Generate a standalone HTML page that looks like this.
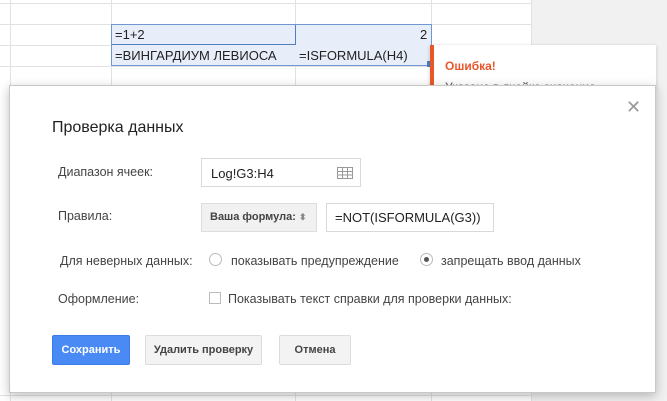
<!DOCTYPE html><html><head><meta charset="utf-8"><style>
body{margin:0;width:667px;height:401px;overflow:hidden;position:relative;background:#fff;font-family:"Liberation Sans",Arial,sans-serif;color:#222}
.a{position:absolute}
.vl{position:absolute;top:0;height:401px;width:1px;background:#e2e2e2}
.hl{position:absolute;left:0;width:531px;height:1px;background:#e2e2e2}
.btn{position:absolute;top:335px;height:28px;border:1px solid #dcdcdc;background:#f3f3f3;border-radius:2px;font-size:11px;font-weight:bold;color:#444;line-height:28px;text-align:center}
</style></head><body>
<div class="a" style="left:531px;top:0;width:136px;height:401px;background:#f1f1f1"></div>
<div class="vl" style="left:10px"></div><div class="vl" style="left:111px"></div><div class="vl" style="left:295px"></div><div class="vl" style="left:431px"></div><div class="vl" style="left:531px"></div>
<div class="hl" style="top:3px"></div><div class="hl" style="top:24px"></div><div class="hl" style="top:45px"></div><div class="hl" style="top:66px"></div>
<div class="hl" style="top:395px"></div>
<div class="a" style="left:111px;top:24px;width:320px;height:42px;background:#e8eef9"></div>
<div class="a" style="left:111px;top:24px;width:184px;height:20px;border:1px solid #4f7fc2;box-sizing:border-box;width:185px;height:21px"></div>
<div class="a" style="left:111px;top:24px;width:321px;height:42px;border:1px solid #6f98d2;box-sizing:border-box"></div>
<div class="a" style="left:115px;top:27px;font-size:13px">=1+2</div>
<div class="a" style="left:420px;top:27px;font-size:13px">2</div>
<div class="a" style="left:115px;top:48px;font-size:13px">=ВИНГАРДИУМ ЛЕВИОСА</div>
<div class="a" style="left:299px;top:48px;font-size:13px">=ISFORMULA(H4)</div>
<div class="a" style="left:427px;top:61px;width:6px;height:6px;background:#4f7fc2"></div>
<div class="a" style="left:430px;top:45px;width:226px;height:45px;background:#fff;box-shadow:0 1px 4px rgba(0,0,0,.2)"></div>
<div class="a" style="left:430px;top:45px;width:4px;height:40px;background:#e8572a"></div>
<div class="a" style="left:445px;top:59px;font-size:12px;font-weight:bold;color:#e8572a">Ошибка!</div>
<div class="a" style="left:445px;top:80px;font-size:12px;color:#555">Указано в ячейке значение</div>
<div class="a" style="left:9px;top:85px;width:647px;height:308px;background:#fff;border:1px solid #c8c8c8;box-sizing:border-box;box-shadow:0 3px 10px rgba(0,0,0,.25)"></div>
<div class="a" style="left:626px;top:97px;font-size:18px;color:#999">✕</div>
<div class="a" style="left:52px;top:119px;font-size:16px">Проверка данных</div>
<div class="a" style="left:58px;top:165px;font-size:12.5px;color:#444">Диапазон ячеек:</div>
<div class="a" style="left:201px;top:158px;width:160px;height:29px;border:1px solid #d9d9d9;box-sizing:border-box"></div>
<div class="a" style="left:211px;top:166px;font-size:13px">Log!G3:H4</div>
<svg class="a" style="left:336px;top:166px" width="18" height="14"><g stroke="#999" fill="none" stroke-width="1"><rect x="1.5" y="1.5" width="15" height="11"/><path d="M1.5 5.5h15M1.5 9h15M6.5 1.5v11M11.5 1.5v11"/></g></svg>
<div class="a" style="left:58px;top:209px;font-size:12.5px;color:#444">Правила:</div>
<div class="a" style="left:201px;top:203px;width:116px;height:29px;background:#f1f1f1;border:1px solid #ddd;box-sizing:border-box;font-size:11px;font-weight:bold;color:#444;line-height:27px;padding-left:8px">Ваша формула: <span style="font-size:9px;color:#888">⬍</span></div>
<div class="a" style="left:326px;top:203px;width:168px;height:29px;border:1px solid #d9d9d9;box-sizing:border-box;font-size:13px;line-height:27px;padding-left:8px">=NOT(ISFORMULA(G3))</div>
<div class="a" style="left:60px;top:254px;font-size:12.5px;color:#444">Для неверных данных:</div>
<div class="a" style="left:209px;top:253px;width:13px;height:13px;border:1px solid #bbb;border-radius:50%;box-sizing:border-box"></div>
<div class="a" style="left:231px;top:254px;font-size:12.5px;color:#444">показывать предупреждение</div>
<div class="a" style="left:420px;top:253px;width:13px;height:13px;border:1px solid #bbb;border-radius:50%;box-sizing:border-box"></div>
<div class="a" style="left:424px;top:257px;width:5px;height:5px;border-radius:50%;background:#555"></div>
<div class="a" style="left:441px;top:254px;font-size:12.5px;color:#444">запрещать ввод данных</div>
<div class="a" style="left:58px;top:292px;font-size:12.5px;color:#444">Оформление:</div>
<div class="a" style="left:209px;top:292px;width:12px;height:12px;border:1px solid #bbb;box-sizing:border-box"></div>
<div class="a" style="left:228px;top:292px;font-size:12.5px;color:#444">Показывать текст справки для проверки данных:</div>
<div class="btn" style="left:52px;width:76px;background:#4a8af4;border-color:#3b7be8;color:#fff">Сохранить</div>
<div class="btn" style="left:145px;width:115px">Удалить проверку</div>
<div class="btn" style="left:279px;width:70px">Отмена</div>
</body></html>
